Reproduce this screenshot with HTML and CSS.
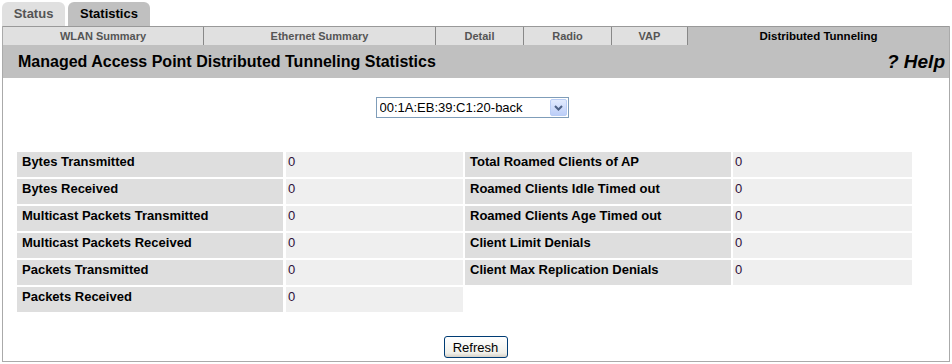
FILE: index.html
```html
<!DOCTYPE html>
<html lang="en">

<head>
    <meta charset="UTF-8">
    <title>Distributed Tunneling Statistics</title>
    <link rel="stylesheet" href="styles.css">
</head>

<body>
    <div class="tabs">
        <div class="tab">Status</div>
        <div class="tab active">Statistics</div>
    </div>
    <div class="panel">
        <div class="subnav">
            <div class="sub w-wlan">WLAN Summary</div>
            <div class="sub w-eth">Ethernet Summary</div>
            <div class="sub w-detail">Detail</div>
            <div class="sub w-radio">Radio</div>
            <div class="sub w-vap">VAP</div>
            <div class="sub current">Distributed Tunneling</div>
        </div>
        <div class="titlebar">
            <h1>Managed Access Point Distributed Tunneling Statistics</h1>
            <span class="help">? Help</span>
        </div>
        <div class="content">
            <div class="picker">
                <div class="select-box">
                    <select class="ap-select">
                        <option>00:1A:EB:39:C1:20-back</option>
                    </select>
                    <span class="arrow">
                        <svg width="9" height="6" viewBox="0 0 9 6">
                            <path d="M1 1 L4.5 4.5 L8 1" fill="none" stroke="#4d6185" stroke-width="2"/>
                        </svg>
                    </span>
                </div>
            </div>

            <div class="stats">
                <div class="stat-table">
                    <div class="lbl">Bytes Transmitted</div><div class="val">0</div>
                    <div class="lbl">Bytes Received</div><div class="val">0</div>
                    <div class="lbl">Multicast Packets Transmitted</div><div class="val">0</div>
                    <div class="lbl">Multicast Packets Received</div><div class="val">0</div>
                    <div class="lbl">Packets Transmitted</div><div class="val">0</div>
                    <div class="lbl">Packets Received</div><div class="val">0</div>
                </div>
                <div class="stat-table">
                    <div class="lbl">Total Roamed Clients of AP</div><div class="val">0</div>
                    <div class="lbl">Roamed Clients Idle Timed out</div><div class="val">0</div>
                    <div class="lbl">Roamed Clients Age Timed out</div><div class="val">0</div>
                    <div class="lbl">Client Limit Denials</div><div class="val">0</div>
                    <div class="lbl">Client Max Replication Denials</div><div class="val">0</div>
                </div>
            </div>

            <div class="actions">
                <button type="button">Refresh</button>
            </div>
        </div>
    </div>
</body>

</html>
```

FILE: styles.css
```css
/* Page frame */
body {
    font-family: "Liberation Sans", Arial, sans-serif;
    margin: 0;
    padding: 0;
    background-color: #fff;
    color: #000;
}

/* Top tabs */
.tabs {
    display: flex;
    gap: 3px;
    padding: 2px 0 0 2px;
    height: 24px;
}

.tab {
    width: 63px;
    height: 24px;
    line-height: 23px;
    text-align: center;
    font-size: 13px;
    font-weight: bold;
    color: #555;
    background-color: #e0e0e0;
    border-radius: 6px 6px 0 0;
}

.tab.active {
    width: 82px;
    color: #000;
    background-color: #c0c0c0;
}

/* Main panel */
.panel {
    margin-left: 2px;
    width: 946px;
    border-left: 1px solid #aaa;
    border-right: 1px solid #aaa;
    border-bottom: 1px solid #aaa;
}

.subnav {
    display: flex;
    height: 18px;
    border-top: 1px solid #999;
    background-color: #e0e0e0;
}

.sub {
    font-size: 11px;
    font-weight: bold;
    color: #555;
    line-height: 18px;
    text-align: center;
    border-right: 1px solid #888;
    box-sizing: border-box;
}

.w-wlan { width: 201px; }
.w-eth { width: 232px; }
.w-detail { width: 88px; }
.w-radio { width: 88px; }
.w-vap { width: 76px; }

.sub.current {
    flex: 1;
    color: #000;
    background-color: #c0c0c0;
    border-right: none;
    font-size: 11.5px;
}

.titlebar {
    display: flex;
    justify-content: space-between;
    align-items: center;
    height: 33px;
    background-color: #c0c0c0;
    padding: 0 4px 0 15px;
}

.titlebar h1 {
    margin: 0;
    font-size: 16px;
    font-weight: bold;
}

.help {
    font-size: 19px;
    font-weight: bold;
    font-style: italic;
}

/* Content */
.content {
    padding: 19px 0 3px 0;
}

.picker {
    display: flex;
    justify-content: center;
    padding-right: 8px;
}

.select-box {
    display: flex;
    align-items: center;
    width: 191px;
    height: 19px;
    border: 1px solid #7f9db9;
    background-color: #fff;
}

.ap-select {
    appearance: none;
    -webkit-appearance: none;
    border: none;
    outline: none;
    background: transparent;
    flex: 1;
    font-family: "Liberation Sans", Arial, sans-serif;
    font-size: 13px;
    padding: 0 0 0 3px;
    height: 19px;
    color: #000;
}

.arrow {
    display: flex;
    align-items: center;
    justify-content: center;
    width: 15px;
    height: 15px;
    margin-right: 1px;
    border: 1px solid #b9cdf5;
    border-radius: 2px;
    background: linear-gradient(#e2ebfe, #bccef8);
}

.stats {
    display: flex;
    gap: 2px;
    margin: 34px 0 0 14px;
}

.stat-table {
    display: grid;
    grid-template-columns: 266px 177px;
    grid-auto-rows: 25px;
    column-gap: 3px;
    row-gap: 2px;
    align-content: start;
}

.stat-table + .stat-table {
    grid-template-columns: 266px 179px;
    column-gap: 2px;
}

.lbl,
.val {
    font-size: 13px;
    line-height: 15px;
    padding: 2px 5px;
}

.lbl {
    font-weight: bold;
    background-color: #dedede;
}

.val {
    background-color: #efefef;
    color: #2e0f3a;
    padding-left: 2px;
}

.actions {
    display: flex;
    justify-content: center;
    margin-top: 24px;
    padding-right: 1px;
}

button {
    width: 64px;
    height: 22px;
    font-family: "Liberation Sans", Arial, sans-serif;
    font-size: 13px;
    color: #000;
    border: 1px solid #003c74;
    border-radius: 3px;
    background: linear-gradient(#fff, #f0f0ea 80%, #d6d0c5);
    padding: 0;
    cursor: pointer;
}
```
